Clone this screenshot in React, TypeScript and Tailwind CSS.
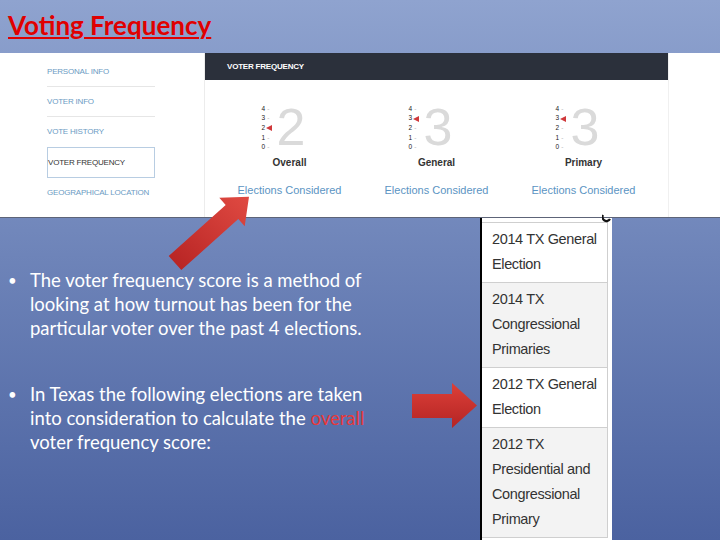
const navItems = [
  { label: 'PERSONAL INFO', divider: true },
  { label: 'VOTER INFO', divider: true },
  { label: 'VOTE HISTORY', divider: false },
  { label: 'VOTER FREQUENCY', active: true },
  { label: 'GEOGRAPHICAL LOCATION', divider: false },
];

const scores = [
  { label: 'Overall', value: 2 },
  { label: 'General', value: 3 },
  { label: 'Primary', value: 3 },
];

const elections = [
  { lines: ['2014 TX General', 'Election'], shaded: false },
  { lines: ['2014 TX', 'Congressional', 'Primaries'], shaded: true },
  { lines: ['2012 TX General', 'Election'], shaded: false },
  { lines: ['2012 TX', 'Presidential and', 'Congressional', 'Primary'], shaded: true },
];

function Marker() {
  return (
    <svg width="6" height="6" viewBox="0 0 6 6" className="ml-[1px]">
      <polygon points="6,0 6,6 0,3" fill="#d0393b" />
    </svg>
  );
}

function ScoreColumn({ label, value }: { label: string; value: number }) {
  return (
    <div className="w-[147px] flex flex-col items-center pt-[24px]">
      <div className="flex items-start pr-[12px]">
        <div className="flex flex-col w-[13px]">
          {[4, 3, 2, 1, 0].map((n) => (
            <div key={n} className="h-[9.7px] flex items-center text-[6.5px] leading-none text-[#222]">
              <span>{n}</span>
              {n === value ? <Marker /> : <span className="ml-[2px] text-[#bbb]">-</span>}
            </div>
          ))}
        </div>
        <div className="ml-[2px] text-[52px] leading-[46px] text-[#dadada]">{value}</div>
      </div>
      <div className="mt-[5px] text-[10px] leading-[12px] font-bold text-[#333]">{label}</div>
      <div className="mt-[15px] text-[11px] leading-[13px] text-[#5b94c3]">Elections Considered</div>
    </div>
  );
}

export default function App() {
  return (
    <div className="relative w-[720px] h-[540px] overflow-hidden flex flex-col bg-linear-to-b from-[#8fa3cf] to-[#4b62a0] font-['Lato',sans-serif]">
      {/* Title */}
      <div className="h-[53px] pl-[8px] pt-[8px]">
        <h1 className="text-[26px] leading-[34px] font-bold text-[#e00000] underline decoration-2 underline-offset-2">
          Voting Frequency
        </h1>
      </div>

      {/* Screenshot panel */}
      <div className="h-[165px] bg-white flex border-b border-[#5d6478] font-['Liberation_Sans',Arial,sans-serif]">
        <div className="w-[205px] border-r border-[#ececec] pt-[4px] pl-[47px]">
          {navItems.map((item) =>
            item.active ? (
              <div
                key={item.label}
                className="w-[108px] h-[31px] border border-[#b8cde2] flex items-center text-[8px] text-[#333] tracking-tight"
              >
                {item.label}
              </div>
            ) : (
              <div
                key={item.label}
                className={`w-[108px] h-[30px] flex items-center text-[8px] text-[#6b9bc3] tracking-tight ${
                  item.divider ? 'border-b border-[#e6e6e6]' : ''
                }`}
              >
                {item.label}
              </div>
            )
          )}
        </div>

        <div className="w-[463px] flex flex-col">
          <div className="h-[27px] bg-[#2b303b] text-white text-[8px] font-bold pl-[22px] flex items-center tracking-tight">
            VOTER FREQUENCY
          </div>
          <div className="flex px-[11px]">
            {scores.map((s) => (
              <ScoreColumn key={s.label} {...s} />
            ))}
          </div>
        </div>

        <div className="flex-1 border-l border-[#f0f0f0]" />
      </div>

      {/* Lower slide area */}
      <div className="flex flex-1 min-h-0">
        <div className="w-[480px] pt-[50px] text-white text-[18.5px] leading-[24px]">
          <div className="flex">
            <span className="w-[30px] pl-[8px] shrink-0 text-[15px]">•</span>
            <p className="whitespace-nowrap">
              The voter frequency score is a method of
              <br />
              looking at how turnout has been for the
              <br />
              particular voter over the past 4 elections.
            </p>
          </div>
          <div className="flex mt-[42px]">
            <span className="w-[30px] pl-[8px] shrink-0 text-[15px]">•</span>
            <p className="whitespace-nowrap">
              In Texas the following elections are taken
              <br />
              into consideration to calculate the <span className="text-[#e8383a]">overall</span>
              <br />
              voter frequency score:
            </p>
          </div>
        </div>

        <div className="relative w-[132px] border-l-2 border-black bg-white pt-[4px] font-['Liberation_Sans',Arial,sans-serif]">
          <div className="w-[126px] border-r border-t border-[#cfcfcf]">
            {elections.map((e, i) => (
              <div
                key={i}
                className={`pl-[10px] pt-[4px] pb-[5px] border-b border-[#cfcfcf] text-[14.5px] leading-[25px] text-[#333] whitespace-nowrap tracking-tight ${
                  e.shaded ? 'bg-[#f3f3f3]' : 'bg-white'
                }`}
              >
                {e.lines.map((l) => (
                  <div key={l}>{l}</div>
                ))}
              </div>
            ))}
          </div>
          <svg className="absolute right-[1px] top-[-4px]" width="9" height="9" viewBox="0 0 9 9">
            <path d="M1 1 A4 4 0 1 0 8 5" stroke="#111" strokeWidth="2.2" fill="none" />
          </svg>
        </div>
      </div>

      {/* Arrows */}
      <svg className="absolute left-0 top-0 pointer-events-none" width="720" height="540" viewBox="0 0 720 540">
        <defs>
          <linearGradient id="diag" x1="0" y1="1" x2="1" y2="0">
            <stop offset="0" stopColor="#b52222" />
            <stop offset="1" stopColor="#e04a42" />
          </linearGradient>
          <linearGradient id="horiz" x1="0" y1="0" x2="0" y2="1">
            <stop offset="0" stopColor="#dd4038" />
            <stop offset="1" stopColor="#b42424" />
          </linearGradient>
        </defs>
        <polygon
          points="181.3,270.1 168.7,255.9 225.7,204.9 219.3,197.8 249,196.7 244.7,226.2 238.3,219.1"
          fill="url(#diag)"
        />
        <polygon points="412,394 452,394 452,383 477,405.5 452,428 452,418 412,418" fill="url(#horiz)" />
      </svg>
    </div>
  );
}
